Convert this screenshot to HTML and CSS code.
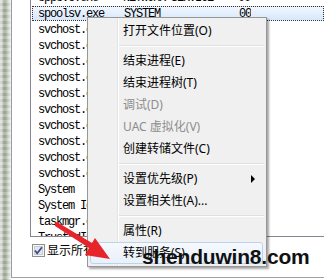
FILE: index.html
```html
<!DOCTYPE html>
<html lang="zh-CN">
<head>
    <meta charset="UTF-8">
    <title>任务管理器</title>
    <link rel="stylesheet" href="styles.css">
</head>
<body>
    <div class="window">
        <div class="frame-edge"></div>
        <div class="panel">
            <div class="listbox">
                <div class="rows">
                    <div class="row row-cut"><span class="name">sppsvc.exe</span><span class="user">NETWORK SERVICE</span><span class="cpu">00</span></div>
                    <div class="row selected"><span class="name">spoolsv.exe</span><span class="user">SYSTEM</span><span class="cpu">00</span></div>
                    <div class="row"><span class="name">svchost.exe</span><span class="user">SYSTEM</span><span class="cpu">00</span></div>
                    <div class="row"><span class="name">svchost.exe</span><span class="user">LOCAL SERVICE</span><span class="cpu">00</span></div>
                    <div class="row"><span class="name">svchost.exe</span><span class="user">SYSTEM</span><span class="cpu">00</span></div>
                    <div class="row"><span class="name">svchost.exe</span><span class="user">NETWORK SERVICE</span><span class="cpu">00</span></div>
                    <div class="row"><span class="name">svchost.exe</span><span class="user">SYSTEM</span><span class="cpu">00</span></div>
                    <div class="row"><span class="name">svchost.exe</span><span class="user">LOCAL SERVICE</span><span class="cpu">00</span></div>
                    <div class="row"><span class="name">svchost.exe</span><span class="user">SYSTEM</span><span class="cpu">00</span></div>
                    <div class="row"><span class="name">svchost.exe</span><span class="user">LOCAL SERVICE</span><span class="cpu">00</span></div>
                    <div class="row"><span class="name">svchost.exe</span><span class="user">NETWORK SERVICE</span><span class="cpu">00</span></div>
                    <div class="row"><span class="name">svchost.exe</span><span class="user">SYSTEM</span><span class="cpu">00</span></div>
                    <div class="row"><span class="name">System</span><span class="user">SYSTEM</span><span class="cpu">01</span></div>
                    <div class="row"><span class="name">System Idle Process</span><span class="user">SYSTEM</span><span class="cpu">95</span></div>
                    <div class="row"><span class="name">taskmgr.exe</span><span class="user">Administrator</span><span class="cpu">02</span></div>
                    <div class="row"><span class="name">TrustedInstaller.exe</span><span class="user">SYSTEM</span><span class="cpu">00</span></div>
                </div>
            </div>
            <label class="check-row">
                <span class="checkbox">
                    <svg width="13" height="13" viewBox="0 0 13 13">
                        <rect x="0.5" y="0.5" width="12" height="12" fill="#f4f4f4" stroke="#8e8f8f"/>
                        <rect x="2.5" y="2.5" width="8" height="8" fill="#e3e6ea" stroke="#c9ccd1"/>
                        <path d="M3 6.5 L5.2 9.2 L10 3.2" fill="none" stroke="#3a4f8c" stroke-width="1.8"/>
                    </svg>
                </span>
                显示所有用户的进程(S)
            </label>
        </div>
    </div>

    <ul class="menu">
        <li class="item">打开文件位置(O)</li>
        <li class="sep"></li>
        <li class="item">结束进程(E)</li>
        <li class="item">结束进程树(T)</li>
        <li class="item disabled">调试(D)</li>
        <li class="item disabled">UAC 虚拟化(V)</li>
        <li class="item">创建转储文件(C)</li>
        <li class="sep"></li>
        <li class="item has-sub">设置优先级(P)<span class="sub-arrow"></span></li>
        <li class="item">设置相关性(A)...</li>
        <li class="sep"></li>
        <li class="item">属性(R)</li>
        <li class="item hover">转到服务(S)</li>
    </ul>

    <svg class="arrow" width="324" height="280" viewBox="0 0 324 280">
        <path d="M55 223 L57 222 L92 243 L95 238 L110 259 L85 255 L89 248 L55 226 Z" fill="#e8242b"/>
    </svg>

    <div class="watermark">shenduwin8.com</div>
</body>
</html>
```

FILE: styles.css
```css
body {
    margin: 0;
    width: 324px;
    height: 280px;
    overflow: hidden;
    background: #ffffff;
    position: relative;
    font-family: "Noto Sans", "Noto Sans CJK SC", sans-serif;
    font-size: 12px;
}
.window {
    display: flex;
    height: 280px;
}
.frame-edge {
    width: 11px;
    flex: none;
    background:
        repeating-linear-gradient(to bottom, rgba(255,255,255,0.18) 0 3px, rgba(0,0,0,0.04) 3px 6px),
        linear-gradient(to right, #e2e4e0 0, #d3d7cf 2px, #9ea897 4px, #a7b1a1 6px, #cdd3c9 8px, #e9ebe7 10px, #f4f5f3 11px);
}
.panel {
    flex: 1;
    height: 278px;
    border-left: 1px solid #9c9c9c;
    border-bottom: 1px solid #a0a0a0;
    padding-left: 18px;
    box-sizing: border-box;
}
.listbox {
    height: 236px;
    border-left: 1px solid #828790;
    border-bottom: 1px solid #828790;
    overflow: hidden;
}
.rows {
    font-family: "Liberation Mono", monospace;
    font-size: 12px;
    letter-spacing: -1.2px;
    color: #000;
}
.row {
    display: grid;
    grid-template-columns: 87px 100px 31px;
    height: 16px;
    line-height: 16px;
    margin-left: 1px;
    white-space: nowrap;
}
.row-cut {
    margin-top: -10px;
}
.row span {
    overflow: hidden;
}
.name {
    padding-left: 6px;
}
.user {
    padding-left: 4px;
}
.cpu {
    text-align: right;
}
.selected {
    height: 15px;
    line-height: 14px;
    margin-bottom: 1px;
    border: 1px dotted #333;
    box-sizing: border-box;
    background: linear-gradient(#f1f7fe, #d6e7fa);
}
.selected .name {
    padding-left: 5px;
}
.check-row {
    display: flex;
    align-items: center;
    gap: 2px;
    margin-top: 7px;
    margin-left: 2px;
    height: 13px;
    line-height: 13px;
    font-size: 12px;
    color: #000;
    white-space: nowrap;
}
.checkbox {
    width: 13px;
    height: 13px;
    display: block;
}
.checkbox svg {
    display: block;
}

/* context menu */
.menu {
    position: absolute;
    left: 87px;
    top: 17px;
    width: 180px;
    height: 250px;
    box-sizing: border-box;
    margin: 0;
    padding: 2px;
    list-style: none;
    border: 1px solid #979797;
    background: linear-gradient(to right, #f0f0f0 29px, #e2e3e3 29px, #e2e3e3 30px, #ffffff 30px, #ffffff 31px, #f0f0f0 31px);
    box-shadow: 2px 2px 2px rgba(0, 0, 0, 0.35);
}
.item {
    height: 22px;
    line-height: 22px;
    padding-left: 33px;
    color: #000;
    display: flex;
    align-items: center;
    box-sizing: border-box;
    white-space: nowrap;
}
.item.disabled {
    color: #8d8d8d;
}
.item.hover {
    border: 1px solid #bcd3ee;
    border-radius: 3px;
    padding-left: 32px;
    margin-right: 1px;
    background: linear-gradient(#f6f9fd, #e8f0fa);
}
.sub-arrow {
    margin-left: auto;
    margin-right: 9px;
    width: 0;
    height: 0;
    border-left: 4px solid #000;
    border-top: 4px solid transparent;
    border-bottom: 4px solid transparent;
}
.sep {
    height: 8px;
    margin-left: 29px;
    background: linear-gradient(to bottom, transparent 3px, #e0e0e0 3px, #e0e0e0 4px, #ffffff 4px, #ffffff 5px, transparent 5px);
}

.arrow {
    position: absolute;
    left: 0;
    top: 0;
    pointer-events: none;
}
.watermark {
    position: absolute;
    left: 142px;
    top: 243px;
    font-family: "Liberation Sans", sans-serif;
    font-weight: bold;
    font-size: 21px;
    line-height: 28px;
    color: #111;
    letter-spacing: -0.2px;
}
```
